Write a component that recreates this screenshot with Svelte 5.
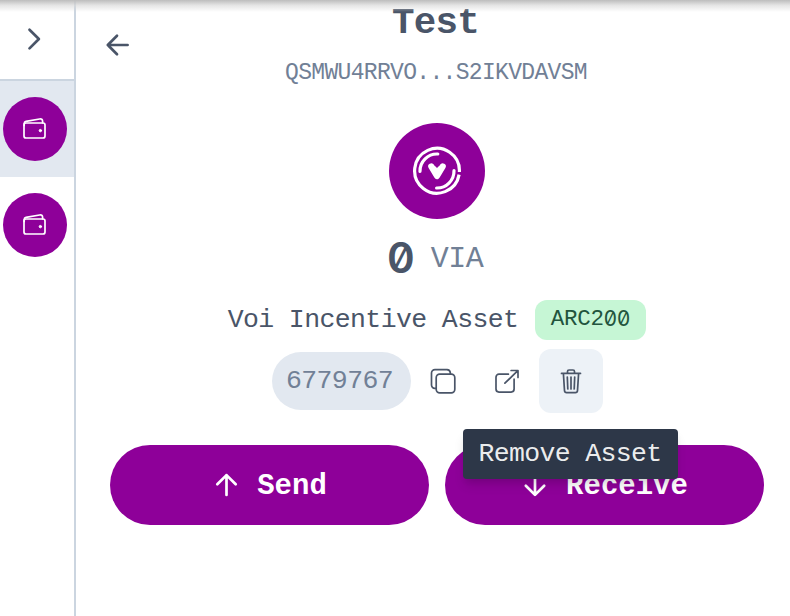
<script>
  const wallets = [{ active: true }, { active: false }];
</script>

<div class="app">
  <aside>
    <button class="toggle" aria-label="Expand">
      <svg width="32" height="32" viewBox="0 0 32 32"><path d="M11.5 6.8 20.9 16l-9.4 9.4" class="thick" /></svg>
    </button>
    {#each wallets as wallet}
      <div class="account" class:active={wallet.active}>
        <div class="avatar">
          <svg width="28" height="28" viewBox="0 0 28 28">
            <rect x="3" y="8" width="21" height="15" rx="2" />
            <path d="M3.2 10.5V8.4q0-1.6 1.8-2L18.6 4q2.8-.5 3 2.1v1.7" />
            <circle cx="19.4" cy="15.6" r="1.2" fill="#fff" stroke-width="1" />
          </svg>
        </div>
      </div>
    {/each}
  </aside>

  <main>
    <button class="back" aria-label="Back">
      <svg width="32" height="32" viewBox="0 0 32 32"><path d="M16 6.8 6.8 16l9.2 9.2M6.8 16h19.8" class="thick" /></svg>
    </button>
    <h1>Test</h1>
    <div class="address">QSMWU4RRVO...S2IKVDAVSM</div>

    <div class="asset-icon">
      <svg width="52" height="52" viewBox="0 0 52 52">
        <path d="M48.4 27A22.4 22.4 0 1 0 48.1 29.6" stroke-width="3.2" stroke-linecap="butt" />
        <path d="M9 26.4A17 17 0 0 1 26.8 9M43 25.6A17 17 0 0 1 25.6 43" stroke-width="3.2" />
        <path d="M20.3 21.4 26 31l5.7-9.6" stroke-width="6.2" />
        <path d="m23.5 23.5 2.5 4 2.5-4" stroke-width="4.4" />
      </svg>
    </div>

    <div class="balance"><span class="amount">0</span><span class="unit">VIA</span></div>

    <div class="name-row">
      <span class="name">Voi Incentive Asset</span>
      <span class="tag">ARC2<span class="zero">0</span><span class="zero">0</span></span>
    </div>

    <div class="actions">
      <span class="pill">6779767</span>
      <button class="icon-button" aria-label="Copy">
        <svg width="32" height="32" viewBox="0 0 32 32">
          <rect x="9.2" y="9.2" width="18.6" height="18.6" rx="3.5" />
          <path d="M9 23.3H7.7a3.2 3.2 0 0 1-3.2-3.2V8.1A3.5 3.5 0 0 1 8 4.6h12a3.5 3.5 0 0 1 3.3 3.1v1.4" />
        </svg>
      </button>
      <button class="icon-button" aria-label="Open">
        <svg width="32" height="32" viewBox="0 0 32 32">
          <path d="M17.4 9.2H8a3 3 0 0 0-3 3v11.9a3 3 0 0 0 3 3h12.1a3 3 0 0 0 3-3V14.2M13.9 18.2 26.8 5.7M20.1 5.5H27v6.9" />
        </svg>
      </button>
      <button class="icon-button hovered" aria-label="Remove">
        <svg width="32" height="32" viewBox="0 0 32 32">
          <path d="M6.5 8.4h19M8.4 8.6l1.1 17q.2 2 2.1 2h8.8q1.9 0 2.1-2l1.1-17M12.5 8.2V6.5Q12.5 5 14 5h4q1.5 0 1.5 1.5v1.7M12.3 12l.5 12M16 12v12M19.7 12l-.5 12" />
        </svg>
        <span class="tooltip">Remove Asset</span>
      </button>
    </div>

    <div class="buttons">
      <button>
        <svg width="28" height="28" viewBox="0 0 28 28"><path d="M14.5 24V4.2M5.3 13.3l9.2-9.2 9.2 9.2" class="thick" /></svg>
        <span>Send</span>
      </button>
      <button>
        <svg width="28" height="28" viewBox="0 0 28 28"><path d="M14 4v19.8M4.8 14.7 14 23.9l9.2-9.2" class="thick" /></svg>
        <span>Receive</span>
      </button>
    </div>
  </main>
  <div class="top-shadow"></div>
</div>

<style>
  .app {
    position: relative;
    box-sizing: border-box;
    display: flex;
    width: 790px;
    height: 616px;
    overflow: hidden;
    background: #fff;
    color: #4a5568;
    font-family: "Liberation Mono", monospace;
  }
  .top-shadow {
    position: absolute;
    inset: 0 0 auto;
    height: 12px;
    background: linear-gradient(#bdbdbd, rgba(215, 215, 215, 0.65) 45%, rgba(255, 255, 255, 0));
  }
  button {
    padding: 0;
    border: 0;
    background: none;
    color: inherit;
    font: inherit;
  }
  svg {
    display: block;
    flex: none;
    fill: none;
    stroke: currentColor;
    stroke-width: 1.7;
    stroke-linecap: round;
    stroke-linejoin: round;
  }
  .thick {
    stroke-width: 2.7;
  }
  aside {
    box-sizing: border-box;
    flex: none;
    width: 76px;
    border-right: 2px solid #cbd5e0;
  }
  .toggle {
    box-sizing: border-box;
    display: flex;
    align-items: center;
    width: 100%;
    height: 81px;
    padding: 0 0 2px 17.5px;
    border-bottom: 2px solid #cbd5e0;
  }
  .account {
    display: flex;
    align-items: center;
    height: 96px;
    padding-left: 3px;
  }
  .active {
    background: #e2e8f0;
  }
  .avatar,
  .asset-icon {
    display: grid;
    place-items: center;
    border-radius: 50%;
    background: #8e0099;
    color: #fff;
  }
  .avatar {
    width: 64px;
    height: 64px;
  }
  main {
    position: relative;
    box-sizing: border-box;
    display: flex;
    flex: 1;
    flex-direction: column;
    align-items: center;
    padding: 0 26px 0 34px;
  }
  .back {
    position: absolute;
    left: 25px;
    top: 29px;
  }
  h1 {
    margin: 1px 0 0 -3px;
    font-size: 37.5px;
    line-height: 44px;
    letter-spacing: -0.7px;
  }
  .address {
    margin-top: 13px;
    margin-left: -2px;
    color: #718096;
    font-size: 23px;
    line-height: 31px;
    letter-spacing: -0.68px;
  }
  .asset-icon {
    width: 96px;
    height: 96px;
    margin-top: 34px;
  }
  .balance {
    display: flex;
    align-items: center;
    justify-content: center;
    height: 70px;
    margin-top: 4px;
    margin-left: -4px;
  }
  .amount {
    width: 28px;
    margin-right: 16px;
    text-align: center;
    font-family: Inter, sans-serif;
    font-size: 42px;
    line-height: 70px;
    font-weight: 600;
    font-feature-settings: "zero";
  }
  .unit {
    margin-top: 2px;
    color: #718096;
    font-size: 30px;
    line-height: 70px;
    letter-spacing: -0.5px;
  }
  .name-row {
    display: flex;
    align-items: center;
    gap: 17px;
    height: 40px;
    margin-top: 7px;
  }
  .name {
    font-size: 26.5px;
    letter-spacing: -0.6px;
  }
  .tag {
    box-sizing: border-box;
    display: flex;
    justify-content: center;
    width: 111px;
    height: 40px;
    padding-right: 1px;
    border-radius: 12px;
    background: #c6f6d5;
    color: #22543d;
    font-size: 22.5px;
    line-height: 39px;
    letter-spacing: -0.3px;
  }
  .zero {
    width: 13.2px;
    text-align: center;
    font-family: Inter, sans-serif;
    font-size: 21px;
    font-weight: 400;
    line-height: 37px;
    font-feature-settings: "zero";
  }
  .actions {
    display: flex;
    align-items: center;
    height: 64px;
    margin-top: 9px;
  }
  .pill {
    box-sizing: border-box;
    width: 139px;
    height: 58px;
    padding-right: 3px;
    border-radius: 29px;
    background: #e2e8f0;
    color: #718096;
    font-size: 26.5px;
    line-height: 58px;
    letter-spacing: -0.6px;
    text-align: center;
  }
  .icon-button {
    position: relative;
    display: grid;
    place-items: center;
    width: 64px;
    height: 64px;
    border-radius: 12px;
  }
  .hovered {
    background: #edf2f7;
  }
  .tooltip {
    position: absolute;
    z-index: 2;
    left: -76px;
    top: 80px;
    width: 215px;
    height: 50px;
    border-radius: 4px;
    background: #2d3748;
    box-shadow: 0 8px 12px -2px rgba(0, 0, 0, 0.12), 0 4px 6px -2px rgba(0, 0, 0, 0.08);
    color: rgba(255, 255, 255, 0.92);
    font-size: 26.5px;
    line-height: 51px;
    letter-spacing: -0.65px;
  }
  .buttons {
    display: flex;
    gap: 16px;
    width: 100%;
    margin-top: 32px;
  }
  .buttons button {
    display: flex;
    flex: 1;
    align-items: center;
    justify-content: center;
    gap: 17px;
    height: 80px;
    border-radius: 40px;
    background: #8e0099;
    color: #fff;
    font-size: 29px;
    font-weight: 700;
  }
  .buttons span {
    padding-top: 2px;
  }
</style>
